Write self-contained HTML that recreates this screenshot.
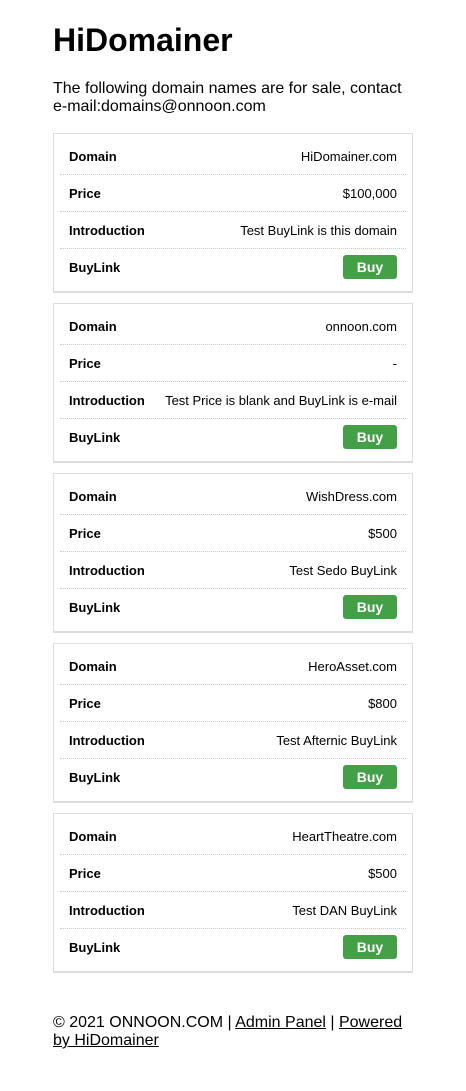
<!DOCTYPE html>
<html><head><meta charset="utf-8"><style>
body{margin:0;background:#fff;font-family:"Liberation Sans",Arial,sans-serif;color:#000}
.wrap{position:absolute;left:53px;width:360px;top:0}
h1{position:absolute;top:20px;left:0;margin:0;font-size:32px;font-weight:bold;line-height:40px;white-space:nowrap}
.intro{position:absolute;top:80px;left:0;font-size:16px;line-height:18px;width:360px}
.card{position:absolute;left:0;width:358px;height:157px;border:1px solid #ddd;border-bottom:2px solid #ddd}
.rows{position:absolute;left:6px;right:6px;top:4px}
.row{height:36px;border-bottom:1px dotted #ccc;display:flex;align-items:center;justify-content:space-between;padding:0 9px;font-size:13px}
.row:last-child{border-bottom:none}
.row b{font-weight:bold}
.buy{background:#43a047;color:#fff;font-weight:bold;font-size:14px;width:54px;height:24px;border-radius:3px;display:flex;align-items:center;justify-content:center}
.foot{position:absolute;top:1014px;left:0;width:360px;font-size:16px;line-height:18px}
.foot a{color:#000;text-decoration:underline}
</style></head><body><div class="wrap">
<h1>HiDomainer</h1>
<div class="intro">The following domain names are for sale, contact e-mail:domains@onnoon.com</div>

<div class="card" style="top:133px"><div class="rows">
<div class="row"><b>Domain</b><span>HiDomainer.com</span></div>
<div class="row"><b>Price</b><span>$100,000</span></div>
<div class="row"><b>Introduction</b><span>Test BuyLink is this domain</span></div>
<div class="row"><b>BuyLink</b><span class="buy">Buy</span></div></div></div>

<div class="card" style="top:303px"><div class="rows">
<div class="row"><b>Domain</b><span>onnoon.com</span></div>
<div class="row"><b>Price</b><span>-</span></div>
<div class="row"><b>Introduction</b><span>Test Price is blank and BuyLink is e-mail</span></div>
<div class="row"><b>BuyLink</b><span class="buy">Buy</span></div></div></div>

<div class="card" style="top:473px"><div class="rows">
<div class="row"><b>Domain</b><span>WishDress.com</span></div>
<div class="row"><b>Price</b><span>$500</span></div>
<div class="row"><b>Introduction</b><span>Test Sedo BuyLink</span></div>
<div class="row"><b>BuyLink</b><span class="buy">Buy</span></div></div></div>

<div class="card" style="top:643px"><div class="rows">
<div class="row"><b>Domain</b><span>HeroAsset.com</span></div>
<div class="row"><b>Price</b><span>$800</span></div>
<div class="row"><b>Introduction</b><span>Test Afternic BuyLink</span></div>
<div class="row"><b>BuyLink</b><span class="buy">Buy</span></div></div></div>

<div class="card" style="top:813px"><div class="rows">
<div class="row"><b>Domain</b><span>HeartTheatre.com</span></div>
<div class="row"><b>Price</b><span>$500</span></div>
<div class="row"><b>Introduction</b><span>Test DAN BuyLink</span></div>
<div class="row"><b>BuyLink</b><span class="buy">Buy</span></div></div></div>

<div class="foot">© 2021 ONNOON.COM | <a>Admin Panel</a> | <a>Powered by HiDomainer</a></div>
</div></body></html>
